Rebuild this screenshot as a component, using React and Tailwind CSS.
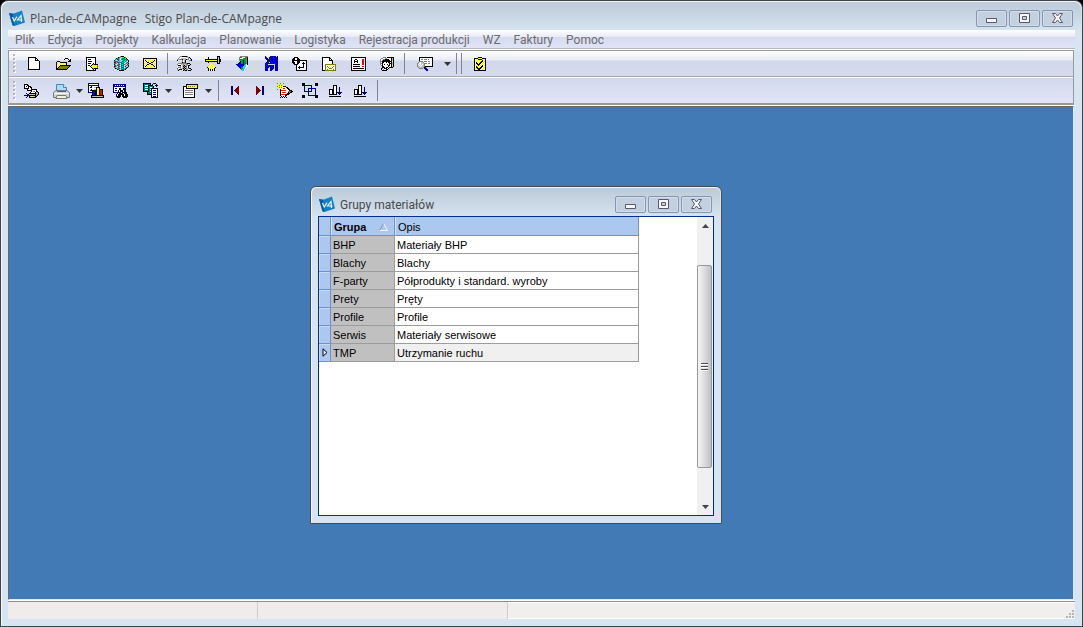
import React, { useState } from "react";
import clsx from "clsx";

const PALETTE = {
  K: "#000000",
  W: "#ffffff",
  G: "#808080",
  L: "#c0c0c0",
  Y: "#ffff00",
  P: "#ffff99",
  O: "#808000",
  N: "#000080",
  B: "#0000ff",
  C: "#00e5ff",
  T: "#008080",
  E: "#00a030",
  R: "#ff0000",
  M: "#800000",
};

const ICONS = {
  blank: [
    "KKKKKKKK....",
    "KWWWWWWKK...",
    "KWWWWWWKWK..",
    "KWWWWWWKKKK.",
    "KWWWWWWWWWWK",
    "KWWWWWWWWWWK",
    "KWWWWWWWWWWK",
    "KWWWWWWWWWWK",
    "KWWWWWWWWWWK",
    "KWWWWWWWWWWK",
    "KWWWWWWWWWWK",
    "KWWWWWWWWWWK",
    "KKKKKKKKKKKK",
  ],
  open: [
    ".........KKK...",
    "........K...K.K",
    ".............KK",
    ".KKK........KKK",
    "KPYPKKKKKKK....",
    "KYPYPYPYPYK....",
    "KPYPYPYPYPK....",
    "KYPYKKKKKKKKKKK",
    "KPYKOOOOOOOOOK.",
    "KYKOOOOOOOOOK..",
    "KKOOOOOOOOOK...",
    "KKKKKKKKKKK....",
  ],
  exportDoc: [
    "KKKKKKKKKK..",
    "KWWWWWWWWK..",
    "KWKKKWWWWK..",
    "KWWWWWWWWK..",
    "KWKKKKWWWK..",
    "KWWWWWWWWK..",
    "KWKKKWWKWK..",
    "KWWWWWKOKKKK",
    "KWKKWKYYYYYO",
    "KWWWKYYYYYYO",
    "KWWWWKYYYYYO",
    "KWWWWWKOKKKK",
    "KWWWWWWKWK..",
    "KKKKKKKKKK..",
  ],
  cube: [
    "......GKKK.....",
    "....KTCWCCKE...",
    "..KTRCWCEEECK..",
    ".TCRRCWEEEEEEK.",
    "KCWCRCCWCEECTCK",
    "TTTTCCWCTECTCWK",
    "KRCRTTTTCTCWCRT",
    "TRCWTCWTRTWCTCK",
    "KCWCTRCTCTRCWRT",
    "TRCRTCWTRTWCTCK",
    "KRCWTRCTCTCRWCK",
    "TCWCTCWTRTWCTK.",
    ".KTCTRCTCTCTK..",
    "...KTCWTRTTK...",
    ".....KKKKK.....",
  ],
  mail: [
    "KKKKKKKKKKKKKK",
    "KYPYPYPYPYPYPK",
    "KPKYPYPYPYPKYK",
    "KYPKPYPYPYKYPK",
    "KPYPKKPYKKYPYK",
    "KYPYPYKKPYPYPK",
    "KPYPKKYPKKPYPK",
    "KYPKPYPYPYKPYK",
    "KPKPYPYPYPYKPK",
    "KYPYPYPYPYPYPK",
    "KKKKKKKKKKKKKK",
  ],
  hammer: [
    "...GGKKKKKG....",
    "..GWWWWWWLLGK..",
    ".GWWLLLLLWWGLK.",
    "GLGGGKLLGKGGWLK",
    "K....GWLK...GGK",
    ".....GWLK......",
    ".....KGGK......",
    ".GGGGGGGGGKKK..",
    "GWWWLLGLLGGWLK.",
    ".KKKWLGKLGLKK..",
    "...GWLKGKGWK...",
    ".GGGWLGKLGWK...",
    "GWWLLGKGKGLGKK.",
    "GLKKK.GKLGGWWLK",
    ".K....KGKK.KKK.",
  ],
  house: [
    "............KKK.",
    "...K........KLK.",
    "...K........KLK.",
    "KKKKKKKKKKKKKLKK",
    "KYYYYYYYYYYYKLKK",
    "KKKKKKKKKKKKKLKK",
    "...K........KLK.",
    "......Y.....KKK.",
    ".....YPY........",
    "....YPYPY.......",
    "...YPYPYPY......",
    "..KYPYPYPYK.....",
    "...KPYPYPK......",
    "...KYKWKYK......",
    "...KPKWKPK......",
  ],
  exit: [
    "....GGGGGGGG.",
    "...GEEWWWEEK.",
    "...GWWWEEEGK.",
    "...GEEEEEEGK.",
    "...GEEEKEEGK.",
    "....NEEKTEGK.",
    "...NNEEKTEGK.",
    "..NBBEEKTTGK.",
    "NNBBBBBKTCWK.",
    ".NBBBBBKCCWW.",
    "..NBBBBCCCWW.",
    "...NNETCCWW..",
    "....NETCCW...",
    ".....TCCW....",
    "......CC.....",
  ],
  plant: [
    "B....NBNBNB.N",
    "NB..BNBNBNNBN",
    "BNB.NBNBNBBNB",
    ".BNBBNBNBNNBN",
    "..BNNBNBNBBNB",
    "..NBBNBNBNNBN",
    ".NBN.BNBNBBNB",
    "NBNBBBBBBBNBN",
    "BNB.......BNB",
    "NBNBNBNBN.NBN",
    "BNBNBNBNB.BNB",
    "NBNB.BNBN.NBN",
    "BNB..NBNB.BNB",
    "NBN..BNB..NBN",
    "BNB..NB...BNB",
  ],
  info: [
    "..KKKK..........",
    ".KKWWKK.........",
    "KKKWWKKK........",
    "KKKKKKKKKKKKKKK.",
    "KKWWWKKKWWWWWWK.",
    "KKKWWKKKWWWKWWK.",
    ".KKWWKKWWWKKKWK.",
    "..KKKKWWWWWKWWK.",
    "....KWWWWWWKWWK.",
    "....KWWKWWWKWWK.",
    "....KWKKKKKKWWK.",
    "....KWWKWWWWWWK.",
    "....KWWWWWWWWWK.",
    "....KKKKKKKKKKK.",
  ],
  docMail: [
    "KKKKKKKK......",
    "KWWWWWWKK.....",
    "KWWWWWWKWK....",
    "KWWWWWWKKKK...",
    "KWWWWWWWWWK...",
    "KWWWWWWWWWK...",
    "KWWWWWWWWWK...",
    "KWWOOOOOOOOOOO",
    "KWWOPWPWPWPWPO",
    "KWWOWOWPWPWOWO",
    "KWWOPWOWPWOPWO",
    "KWWOWPWOOOWPWO",
    "KWWOPOPWPWPOPO",
    "KKKOOOOOOOOOOO",
  ],
  report: [
    "KKKKKKKKKKKKKKK",
    "KWWWWWWWWWWWWWK",
    "KWWWKKWWWWWRRWK",
    "KWWKWWKWWWWRRWK",
    "KWWKKKKWWWWRRWK",
    "KWWKWWKWWWWRRWK",
    "KWWWWWWWWWWRRWK",
    "KWKKKKKKKWWRRWK",
    "KWWWWWWWWWWWWWK",
    "KWKKKKKKKWWRRWK",
    "KWWWWWWWWWWWWWK",
    "KWKKKKKKKKKKKWK",
    "KWWWWWWWWWWWWWK",
    "KKKKKKKKKKKKKKK",
  ],
  users: [
    "...GGG.KKKKKKK.",
    ".GGWWGGWWWWKLK.",
    "GWWGGKKKKWWKCK.",
    "GWGKKKKKKKWKLK.",
    "GGKKKKKKKKKKYK.",
    "GWKKWWKWKKWKLK.",
    "GGKWWWWWWKKKCK.",
    "GWKWKWWKWKWKLK.",
    ".GKWWWWWKKWKYK.",
    "..KKWWWWKWWKLK.",
    "..KKKWKKWKKKK..",
    ".KGWKKKWK......",
    ".KWGWWKK.......",
    "..KKKKK........",
  ],
  preview: [
    "..KKKKKKKKKKKKKK",
    "..KWWWWWWWWWWWWK",
    "..KWGGWGGGWGWWWK",
    "..KWWWWWWWWWWWWK",
    "..GGGGWGGGWGGWWK",
    ".GLWLLGWWWWWWWWK",
    "GLWWLLLGGGWGGWWK",
    "GWLWLWLGWWWWWWWK",
    "GLWLWLLGWWWWWWWK",
    "GLLWLLLGKKKKKKKK",
    ".GLLLLGKN.......",
    "..GGGG.NBN......",
    "........NNN.....",
    ".........NN.....",
  ],
  checklist: [
    "....KKKK....",
    "KKKKYPYPKKKK",
    "KPYPKKKKYPYK",
    "KYPYPYPYKYPK",
    "KPYPYPYKKPYK",
    "KYKYPYKKPYPK",
    "KPKKPKKPYPYK",
    "KYPKKKPYPYPK",
    "KPYPKPYPKPYK",
    "KYKYPYPKKYPK",
    "KPKKPYKKYPYK",
    "KYPKKKKYPYPK",
    "KPYPKKYPYPYK",
    "KKKKKKKKKKKK",
  ],
  printSet: [
    "KKKK............",
    "KWWKK...........",
    "KWKWKKK.........",
    "KWWWKWKK........",
    "KKKKKWWK........",
    "...KWWWKKKKKK...",
    "...KKKKKWWWWK...",
    ".......KWGGWKK..",
    "......KWWWWKLGK.",
    "..N..KKKKKKKGLK.",
    "...NKLLLLLLKLGK.",
    "NNNNNKKKKKKKGK..",
    "...N.KLYYLLKK...",
    "..N..KKKKKKK....",
  ],
  chart: [
    "NNNNNNNNNNN.....",
    "NWWWWWWWWWN.....",
    "NNNNNNNNNNN.....",
    "NWWNWWWWWWN.....",
    "NWNNWWLLKKKK....",
    "NWWWWWWWKYYK....",
    "NWWNWWLLKYYKKKK.",
    "NWNNKKKKKYYKRRK.",
    "NWWWKBBKKYYKRRK.",
    "NNNNKBBKKYYKRRK.",
    "....KBBKKYYKRRK.",
    "....KBBKKYYKRRK.",
    "...KKKKKKKKKKKKK",
    "...KLLLLLLLLLLLK",
    "...KKKKKKKKKKKKK",
  ],
  find: [
    "NNNNNNNNNNNNN...",
    "NBWBWBWBWBWBN...",
    "NNNNNNNNNNNNN...",
    "NWWWWWWWWWWWN...",
    "NWNNWWKKWWKKN...",
    "NWWWWWKKWWKKN...",
    "NWNNWKWKKKWKK...",
    "NWWWWKWKKKWKK...",
    "NNNNKKKKWKKKKK..",
    "....KWKKKKWKKK..",
    "...KWKKKKKKWKKK.",
    "...KWKKK.KKWKKK.",
    "...KKKKK.KKKKKK.",
    "....KKK...KKKK..",
  ],
  copy: [
    "KKKKKKKK..NNN..",
    "KTTTTTTK.N...N.",
    "KTWWWKKKKK..NNN",
    "KTTTTKTTTTK..N.",
    "KTWWWKTWWTK....",
    "KTTTTKTTKKKKKKK",
    "KTWWWKTWKWWWWWK",
    "KTTTTKTTKWNNNWK",
    "KKKKKKTWKWWWWWK",
    "....KTTTKWNNNWK",
    "....KTTTKWWWWWK",
    "....KKKKKWNNNWK",
    "........KWWWWWK",
    "........KWNNNWK",
    "........KKKKKKK",
  ],
  form: [
    "...KKKKKKKKKKKK",
    "...KYYYYYYYYYYK",
    "KKKKYOYOYOYOYYK",
    "KWWKYYYYYYYYYYK",
    "KWWKKKKKKKKKKKK",
    "KWWWWWWWWWWK...",
    "KWGGGGGGGGWK...",
    "KWWWWWWWWWWK...",
    "KWGGGGGGGGWK...",
    "KWWWWWWWWWWK...",
    "KWGGGGGGGGWK...",
    "KWWWWWWWWWWK...",
    "KWWWWWWWWWWK...",
    "KKKKKKKKKKKK...",
  ],
  first: [
    "NN.....M",
    "NN....MM",
    "NN...MMM",
    "NN..MMMM",
    "NN.MMMMM",
    "NN..MMMM",
    "NN...MMM",
    "NN....MM",
    "NN.....M",
  ],
  last: [
    "M.....NN",
    "MM....NN",
    "MMM...NN",
    "MMMM..NN",
    "MMMMM.NN",
    "MMMM..NN",
    "MMM...NN",
    "MM....NN",
    "M.....NN",
  ],
  newRecord: [
    "O..O..O.........",
    ".Y.Y.Y..........",
    "..OYO...........",
    "OYYYYYKKK.......",
    "..OYOWWWWKK.....",
    ".Y.YWWRRWWKK....",
    "O..KWWWWWWWKK...",
    "...KRRRRRWWWKKK.",
    "...KWWWWWWWOOOKK",
    "...KWRRRRWWKOKK.",
    "...KWWWWWWKKK...",
    "...KRRRRRKKK....",
    "...KWWWWKK......",
    "....K.K.K.......",
    "...K.K.K.K......",
  ],
  group: [
    "KKK..........KKK",
    "KKK..........KKK",
    "KKKNNNNNNN...KKK",
    "..N......N......",
    "..N......N......",
    "..N...NNNNNNNN..",
    "..N...N..N...N..",
    "..N...N..N...N..",
    "..NNNNNNNN...N..",
    "......N......N..",
    "......N......N..",
    "......N......N..",
    "KKK...NNNNNNNKKK",
    "KKK..........KKK",
    "KKK..........KKK",
  ],
  sortBars: [
    "....KKKK.....",
    "....KWWK.....",
    "....KWWK..N..",
    "....KWWK..N..",
    "KKKKKWWK..N..",
    "KWWKKWWK..N..",
    "KWWKKWWK..N..",
    "KWWKKWWKNNNNN",
    "KWWKKWWK.NNN.",
    "KKKKKKKK..N..",
    ".............",
    "KKKKKKKKKKKK.",
  ],
};

// Buttons are odd in width and even in height, so the box is rounded the same way to stay on whole pixels.
function Bitmap({ name }) {
  const rows = ICONS[name];
  const width = Math.max(...rows.map((r) => r.length)) | 1;
  const height = rows.length + (rows.length % 2);
  return (
    <svg width={width} height={height} viewBox={`0 0 ${width} ${height}`} shapeRendering="crispEdges" className="shrink-0" aria-hidden="true">
      {rows.map((row, y) =>
        [...row].map((c, x) => PALETTE[c] && <rect key={`${x}-${y}`} x={x} y={y} width="1" height="1" fill={PALETTE[c]} />)
      )}
    </svg>
  );
}

function PrinterIcon() {
  return (
    <svg width="17" height="18" viewBox="0 0 17 18" aria-hidden="true">
      <path d="M3.5 9V2.5h7l3 3V9" fill="#a9dcf8" stroke="#4b86b8" />
      <path d="M10.5 2.5v3h3" fill="#e8f6ff" stroke="#4b86b8" />
      <path d="M.5 10.5 3 8.5h11l2.5 2v5H.5z" fill="#d0d3d4" stroke="#73797d" />
      <path d="M1 11.5h15" stroke="#f7f7f7" />
      <path d="M4 13.5h9l1 3H3z" fill="#f3f1dc" stroke="#73797d" />
      <path d="M4 9.5h9" stroke="#5a6268" />
    </svg>
  );
}

function AppLogo() {
  return (
    <svg width="17" height="17" viewBox="0 0 17 17" className="shrink-0" aria-hidden="true">
      <path d="M0 3 5 3.4 13 .6 16 12.6 5.5 16 3.5 15.2z" fill="#1382c5" />
      <path d="M0 3 3.5 15.2 5.5 16 4 4z" fill="#0a5d9b" />
      <path d="M3.5 7 5.2 11 8 6.6M12.5 12 12 5.5 8.5 10h5" fill="none" stroke="#e9f6ff" strokeWidth="1.2" />
    </svg>
  );
}

const GLYPHS = {
  Minimize: <path d="M1.5 5.5h10v4h-10z" />,
  Maximize: (
    <>
      <path d="M1.5.5h10v9h-10z" />
      <path d="M4.5 3.5h4v3h-4z" fill="#c3d1e0" />
    </>
  ),
  Close: <path d="M1.5.5h3l2 2.5 2-2.5h3L8.5 5l3 4.5h-3l-2-2.5-2 2.5h-3l3-4.5z" />,
};

function WindowButtons() {
  return (
    <div className="flex gap-[2px]">
      {Object.keys(GLYPHS).map((label) => (
        <button
          key={label}
          type="button"
          aria-label={label}
          className="flex h-[17px] w-[31px] items-center justify-center rounded-[2px] border border-[#8595b3] bg-[#c3d0df] shadow-[inset_0_0_0_1px_#d3deea]"
        >
          <svg width="13" height="10" viewBox="0 0 13 10" fill="#f6f6f6" stroke="#565a6c">
            {GLYPHS[label]}
          </svg>
        </button>
      ))}
    </div>
  );
}

const MENU = ["Plik", "Edycja", "Projekty", "Kalkulacja", "Planowanie", "Logistyka", "Rejestracja produkcji", "WZ", "Faktury", "Pomoc"];

const MAIN_TOOLS = [
  ["blank", "Nowy"],
  ["open", "Otwórz"],
  ["exportDoc", "Eksport"],
  ["cube", "Artykuły"],
  ["mail", "Poczta"],
  ["|"],
  ["hammer", "Narzędzia"],
  ["house", "Magazyn"],
  ["exit", "Wyjście"],
  ["plant", "Produkcja"],
  ["info", "Informacje"],
  ["docMail", "Wyślij dokument"],
  ["report", "Raport"],
  ["users", "Użytkownicy"],
];

function ToolButton({ name, label, wide }) {
  return (
    <button type="button" aria-label={label} className={clsx("flex h-6 shrink-0 items-center justify-center", wide ? "w-[29px]" : "w-[25px]")}>
      {name === "printer" ? <PrinterIcon /> : <Bitmap name={name} />}
    </button>
  );
}

function DropButton({ label }) {
  return (
    <button type="button" aria-label={label} className="flex h-6 w-[10px] shrink-0 items-center justify-center">
      <svg width="7" height="4" viewBox="0 0 7 4" aria-hidden="true">
        <path d="M0 0h7L3.5 4z" fill="#333" />
      </svg>
    </button>
  );
}

function Separator({ className = "mx-1" }) {
  return <div className={clsx("h-[21px] w-px shrink-0 bg-[#80848e]", className)} />;
}

function Grip() {
  return (
    <svg width="3" height="20" viewBox="0 0 3 20" shapeRendering="crispEdges" className="mr-1 ml-1 shrink-0" aria-hidden="true">
      {[0, 4, 8, 12, 16].map((y) => (
        <g key={y}>
          <path d={`M1 ${y + 1}h2v2h-2z`} fill="#fff" />
          <path d={`M0 ${y}h2v2h-2z`} fill="#b1b5c8" />
        </g>
      ))}
    </svg>
  );
}

function Toolbars() {
  return (
    <div className="mr-px border border-[#9a9a9a] border-b-2">
      <div
        role="toolbar"
        aria-label="Standard"
        className="flex h-[26px] items-center border-b border-[#a8a8ac] bg-[linear-gradient(to_bottom,#fff,#e9ecf6_36%,#d2d8ec_40%,#d5daee)]"
      >
        <Grip />
        {MAIN_TOOLS.map(([name, label], i) =>
          name === "|" ? <Separator key={i} className="mx-[2px]" /> : <ToolButton key={name} name={name} label={label} wide />
        )}
        <Separator className="mr-2 ml-[2px]" />
        <ToolButton name="preview" label="Podgląd" />
        <div className="ml-1 flex items-center">
          <DropButton label="Opcje podglądu" />
          <Separator />
          <Separator className="mr-1" />
        </div>
        <ToolButton name="checklist" label="Lista zadań" wide />
      </div>
      <div role="toolbar" aria-label="Widok" className="flex h-[26px] items-center border-t border-white bg-linear-to-b from-[#d2d8ec] to-[#e1e5f7]">
        <Grip />
        <ToolButton name="printSet" label="Drukuj zestaw" />
        <div className="ml-1 flex">
          <ToolButton name="printer" label="Drukuj" />
          <DropButton label="Opcje drukowania" />
        </div>
        <ToolButton name="chart" label="Wykres" />
        <ToolButton name="find" label="Szukaj" />
        <div className="ml-1 flex">
          <ToolButton name="copy" label="Kopiuj" />
          <DropButton label="Opcje kopiowania" />
        </div>
        <div className="ml-[5px] flex">
          <ToolButton name="form" label="Formularz" />
          <DropButton label="Opcje formularza" />
        </div>
        <Separator className="mr-1 ml-[5px]" />
        <ToolButton name="first" label="Pierwszy" />
        <ToolButton name="last" label="Ostatni" />
        <ToolButton name="newRecord" label="Nowy rekord" />
        <ToolButton name="group" label="Grupuj" />
        <ToolButton name="sortBars" label="Sortuj rosnąco" />
        <ToolButton name="sortBars" label="Sortuj malejąco" />
        <Separator />
      </div>
    </div>
  );
}

const GROUPS = [
  ["BHP", "Materiały BHP"],
  ["Blachy", "Blachy"],
  ["F-party", "Półprodukty i standard. wyroby"],
  ["Prety", "Pręty"],
  ["Profile", "Profile"],
  ["Serwis", "Materiały serwisowe"],
  ["TMP", "Utrzymanie ruchu"],
];

function GroupsTable() {
  const [selected, setSelected] = useState("TMP");
  return (
    <table className="w-[320px] shrink-0 table-fixed border-separate border-spacing-0 self-start text-left font-['Liberation_Sans',Arial,sans-serif] text-[11px] leading-4 text-black">
      <colgroup>
        <col className="w-3" />
        <col className="w-16" />
        <col />
      </colgroup>
      <thead>
        <tr className="bg-[#adc8ee]">
          <th className="h-[19px] border-r border-b border-[#6b92d6] p-0" aria-label="Wiersz" />
          <th scope="col" className="border-r border-b border-[#6b92d6] p-0 pt-px pl-[3px] font-bold shadow-[inset_1px_0_0_#d8e6fa]">
            <div className="flex items-center justify-between pr-[6px]">
              Grupa
              <svg width="9" height="8" viewBox="0 0 9 8" aria-hidden="true">
                <path d="M4.5.5l4 7h-8" fill="none" stroke="#f4f8ff" />
                <path d="M4.5.5.5 7.5" stroke="#7b98c8" />
              </svg>
            </div>
          </th>
          <th scope="col" className="border-r border-b border-[#6b92d6] p-0 pt-px pl-[3px] font-normal shadow-[inset_1px_0_0_#d8e6fa]">Opis</th>
        </tr>
      </thead>
      <tbody>
        {GROUPS.map(([code, name]) => (
          <tr key={code} onClick={() => setSelected(code)}>
            <td className="h-[18px] border-r border-b border-[#6b92d6] bg-[#adc8ee] p-0 shadow-[inset_1px_1px_0_#c9dcf7]">
              {selected === code && (
                <svg width="6" height="9" viewBox="0 0 6 9" className="ml-[3px]" aria-hidden="true">
                  <path d="M1 .8v7.4l4-3.7z" fill="#e8f0fc" stroke="#000" />
                </svg>
              )}
            </td>
            <td className="border-r border-b border-[#9c9c9c] bg-[#c0c0c0] p-0 pt-px pl-[2px]">{code}</td>
            <td className={clsx("border-r border-b border-[#9c9c9c] p-0 pt-px pl-[2px]", selected === code ? "bg-[#f0f0f0]" : "bg-white")}>{name}</td>
          </tr>
        ))}
      </tbody>
    </table>
  );
}

function ScrollBar() {
  return (
    <div className="ml-auto flex w-4 shrink-0 flex-col bg-[#f0f0f0]">
      <button type="button" aria-label="W górę" className="flex h-[17px] items-center justify-center">
        <svg width="7" height="4" viewBox="0 0 7 4">
          <path d="M0 4h7L3.5 0z" fill="#444" />
        </svg>
      </button>
      <div className="flex min-h-0 flex-1 flex-col">
        <div className="flex-31" />
        <div className="mr-px flex flex-203 flex-col items-center justify-center gap-px rounded-[2px] border border-[#979797] bg-linear-to-r from-[#f5f5f5] via-[#dcdcdf] to-[#bfc0c4]">
          {[0, 1, 2].map((i) => (
            <div key={i} className="h-[2px] w-[7px] border-t border-[#4d4d4d] bg-white" />
          ))}
        </div>
        <div className="flex-30" />
      </div>
      <button type="button" aria-label="W dół" className="flex h-[17px] items-center justify-center">
        <svg width="7" height="4" viewBox="0 0 7 4">
          <path d="M0 0h7L3.5 4z" fill="#444" />
        </svg>
      </button>
    </div>
  );
}

function GroupsWindow() {
  return (
    <section
      aria-label="Grupy materiałów"
      className="absolute top-[79px] left-[301px] flex h-[338px] w-[412px] flex-col rounded-t-md border border-[#474c54] bg-[#d7e4f2] px-[7px] pb-[7px] shadow-[inset_1px_1px_0_#eef4fa]"
    >
      <header className="-mx-[6px] mt-px flex h-7 items-center rounded-t-[5px] bg-linear-to-b from-[#bdcad8] to-[#d5e2f0] pt-1 pr-2 pl-[7px]">
        <AppLogo />
        <h2 className="ml-1 flex-1 pt-px font-[Roboto,sans-serif] text-xs text-[#4a4a4a]">Grupy materiałów</h2>
        <WindowButtons />
      </header>
      <div className="flex min-h-0 flex-1 border border-[#00308f] bg-white">
        <GroupsTable />
        <ScrollBar />
      </div>
    </section>
  );
}

export default function App() {
  return (
    <div className="h-screen bg-black font-['Open_Sans','Noto_Sans',sans-serif]">
      <div className="flex h-full flex-col rounded-t-lg border border-[#3f4247] bg-[#d7e4f2] px-[7px] pb-[7px] shadow-[inset_1px_1px_0_#f4f8fc]">
        <header className="-mx-[6px] mt-px flex h-7 items-center rounded-t-[7px] bg-linear-to-b from-[#bdcad8] to-[#d5e2f0] pt-1 pr-2 pl-[7px]">
          <AppLogo />
          <h1 className="ml-1 flex flex-1 gap-2 pt-px text-xs text-[#4a4a4a]">
            <span>Plan-de-CAMpagne</span>
            <span>Stigo Plan-de-CAMpagne</span>
          </h1>
          <WindowButtons />
        </header>
        <nav className="flex h-[19px] items-center gap-[13px] border-b border-[#b4b7c8] bg-[linear-gradient(to_bottom,#fff,#e9ecf6_36%,#d6dbef_40%,#e0e4f6)] pt-[2px] pl-[7px] font-[Roboto,sans-serif] text-xs text-[#6d6d6d]">
          {MENU.map((item) => (
            <button key={item} type="button" className="whitespace-nowrap">
              {item}
            </button>
          ))}
        </nav>
        <div className="border-t border-b border-white">
          <Toolbars />
        </div>
        <main className="relative mr-px min-h-0 flex-1 overflow-hidden border border-[#6a6a6a] border-r-[#e3e9f0] border-b-[#e3e9f0] bg-[#427ab5]">
          <GroupsWindow />
        </main>
        <footer className="border-t border-white">
          <div className="flex h-[18px] border-t border-[#8e8e8e] bg-[#f0efee] shadow-[inset_0_1px_0_#fff,inset_0_-1px_0_#fff]">
            <div className="w-[250px] border-r border-[#d2cfcf] bg-[#f0eceb]" />
            <div className="w-[250px] border-r border-[#d2cfcf] bg-[#f0eceb]" />
            <svg width="9" height="9" viewBox="0 0 9 9" className="mt-auto ml-auto" fill="#b5b5b5" aria-hidden="true">
              <path d="M6 0h2v2h-2zM3 3h2v2h-2zM6 3h2v2h-2zM0 6h2v2h-2zM3 6h2v2h-2zM6 6h2v2h-2z" />
            </svg>
          </div>
        </footer>
      </div>
    </div>
  );
}
